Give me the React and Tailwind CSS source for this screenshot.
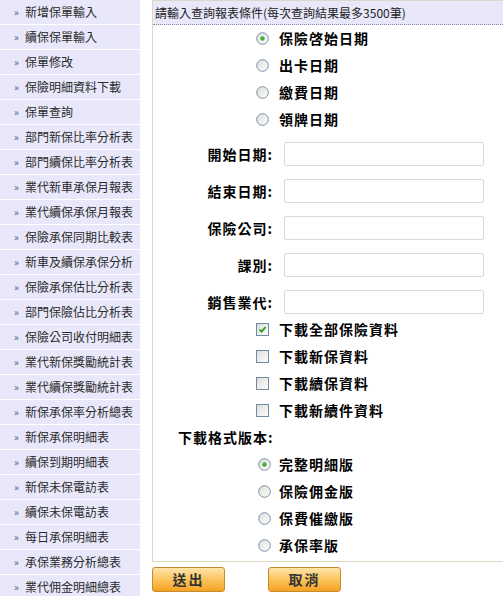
import React, { useState } from 'react';

const menuItems = [
    '新增保單輸入',
    '續保保單輸入',
    '保單修改',
    '保險明細資料下載',
    '保單查詢',
    '部門新保比率分析表',
    '部門續保比率分析表',
    '業代新車承保月報表',
    '業代續保承保月報表',
    '保險承保同期比較表',
    '新車及續保承保分析',
    '保險承保估比分析表',
    '部門保險佔比分析表',
    '保險公司收付明細表',
    '業代新保獎勵統計表',
    '業代續保獎勵統計表',
    '新保承保率分析總表',
    '新保承保明細表',
    '續保到期明細表',
    '新保未保電訪表',
    '續保未保電訪表',
    '每日承保明細表',
    '承保業務分析總表',
    '業代佣金明細總表'
];

const dateTypes = ['保險啓始日期', '出卡日期', '繳費日期', '領牌日期'];
const fields = ['開始日期', '結束日期', '保險公司', '課別', '銷售業代'];
const downloads = ['下載全部保險資料', '下載新保資料', '下載續保資料', '下載新續件資料'];
const formats = ['完整明細版', '保險佣金版', '保費催繳版', '承保率版'];

const Radio = ({ checked }) => (
    <svg width="13" height="13" viewBox="0 0 13 13" className="shrink-0">
        <defs>
            <linearGradient id="rg" x1="0" y1="0" x2="1" y2="1">
                <stop offset="0" stopColor="#dcdcd6" />
                <stop offset="1" stopColor="#ffffff" />
            </linearGradient>
        </defs>
        <circle cx="6.5" cy="6.5" r="5.8" fill="url(#rg)" stroke="#7b8ea8" strokeWidth="1" />
        {checked && <circle cx="6.5" cy="6.5" r="2.2" fill="#3fae3f" />}
    </svg>
);

const Checkbox = ({ checked }) => (
    <svg width="13" height="13" viewBox="0 0 13 13" className="shrink-0">
        <defs>
            <linearGradient id="cg" x1="0" y1="0" x2="1" y2="1">
                <stop offset="0" stopColor="#dcdcd6" />
                <stop offset="1" stopColor="#ffffff" />
            </linearGradient>
        </defs>
        <rect x="0.5" y="0.5" width="12" height="12" fill="url(#cg)" stroke="#6f8aa8" />
        {checked && <path d="M3.5 6.5 L5.5 8.7 L9.6 4.2" fill="none" stroke="#21a121" strokeWidth="1.8" />}
    </svg>
);

const OrangeButton = ({ children }) => (
    <button className="w-[73px] h-[25px] rounded-[3px] border border-[#c98a2c] bg-gradient-to-b from-[#fde5aa] via-[#fbc45c] to-[#f5a21e] text-[14px] font-bold text-[#333] tracking-[2px]">
        {children}
    </button>
);

export default function App() {
    const [dateType, setDateType] = useState(0);
    const [format, setFormat] = useState(0);
    const [checks, setChecks] = useState([true, false, false, false]);

    return (
        <div className="flex w-[503px] h-[596px] overflow-hidden bg-white text-black font-['Noto_Sans_CJK_TC',sans-serif]">
            {/* Sidebar menu */}
            <aside className="w-[140px] shrink-0">
                {menuItems.map((item) => (
                    <div key={item} className="flex items-center h-[25px] bg-[#e8e8fa] border-b border-white">
                        <span className="w-[25px] pl-[14px] text-[10px] text-[#4a5a7a] leading-none">»</span>
                        <span className="text-[12px] text-[#2a2a2a] leading-none">{item}</span>
                    </div>
                ))}
            </aside>

            <main className="ml-[12px] flex-1">
                {/* Query panel */}
                <div className="border-t border-l border-b border-[#ddd9c9] h-[562px]">
                    <div className="h-[24px] bg-[#e8e8fa] border-b border-dotted border-[#8a8aa6] pl-[2px] flex items-center text-[12px] text-[#222]">
                        請輸入查詢報表條件(每次查詢結果最多3500筆)
                    </div>

                    {dateTypes.map((label, i) => (
                        <div key={label} className="h-[27px] flex items-center pl-[103px] gap-[10px] text-[14px] font-bold tracking-[1px] cursor-pointer" onClick={() => setDateType(i)}>
                            <Radio checked={dateType === i} />
                            <span>{label}</span>
                        </div>
                    ))}

                    <div className="mt-[9px] flex flex-col gap-[13px]">
                        {fields.map((label) => (
                            <div key={label} className="flex items-center h-[24px]">
                                <span className="w-[120px] text-right text-[14px] font-bold tracking-[1px]">{label}:</span>
                                <input className="ml-[11px] w-[200px] h-[24px] rounded-[2px] border border-[#d9d9d9] outline-none" />
                            </div>
                        ))}
                    </div>

                    <div className="mt-[2px]">
                        {downloads.map((label, i) => (
                            <div
                                key={label}
                                className="h-[27px] flex items-center pl-[103px] gap-[10px] text-[14px] font-bold tracking-[1px] cursor-pointer"
                                onClick={() => setChecks(checks.map((c, j) => (j === i ? !c : c)))}
                            >
                                <Checkbox checked={checks[i]} />
                                <span>{label}</span>
                            </div>
                        ))}
                    </div>

                    <div className="h-[27px] flex items-center pl-[25px] text-[14px] font-bold tracking-[1px]">下載格式版本:</div>

                    {formats.map((label, i) => (
                        <div key={label} className="h-[27px] flex items-center pl-[105px] gap-[8px] text-[14px] font-bold tracking-[1px] cursor-pointer" onClick={() => setFormat(i)}>
                            <Radio checked={format === i} />
                            <span>{label}</span>
                        </div>
                    ))}
                </div>

                <div className="mt-[5px] flex gap-[43px]">
                    <OrangeButton>送出</OrangeButton>
                    <OrangeButton>取消</OrangeButton>
                </div>
            </main>
        </div>
    );
}
